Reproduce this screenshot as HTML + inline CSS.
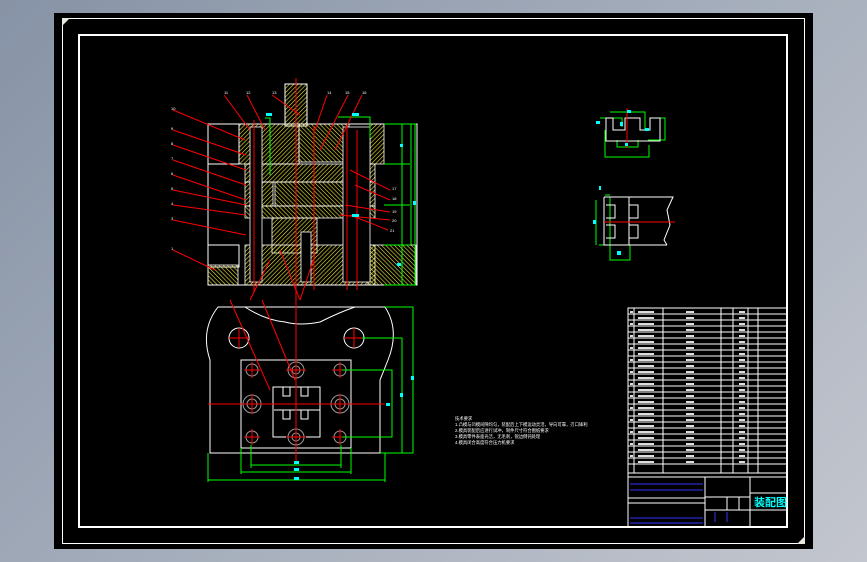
<!DOCTYPE html>
<html><head><meta charset="utf-8"><style>
html,body{margin:0;padding:0;width:867px;height:562px;overflow:hidden;background:linear-gradient(135deg,#8793a6 0%,#a4adbb 50%,#c3c6ce 100%);font-family:"Liberation Sans","Noto Sans CJK SC",sans-serif}
svg{position:absolute;left:0;top:0}
</style></head><body>
<svg width="867" height="562" viewBox="0 0 867 562" xmlns="http://www.w3.org/2000/svg">
<defs>
<pattern id="h" width="3" height="3" patternUnits="userSpaceOnUse" patternTransform="rotate(45)"><line x1="0" y1="0" x2="0" y2="3" stroke="#f0e83a" stroke-width="1.2"/></pattern>
<pattern id="h2" width="3" height="3" patternUnits="userSpaceOnUse" patternTransform="rotate(-45)"><line x1="0" y1="0" x2="0" y2="3" stroke="#f0e83a" stroke-width="1.2"/></pattern>
</defs>
<rect x="54" y="13" width="759" height="536" fill="#000"/>
<rect x="62.5" y="18.5" width="742" height="525" fill="none" stroke="#fff" stroke-width="1"/>
<rect x="79" y="35" width="708" height="492" fill="none" stroke="#fff" stroke-width="2"/>
<polygon points="62,18 70,18 62,26" fill="#e8e8dc"/>
<polygon points="805,544 797,544 805,536" fill="#e8e8dc"/>

<!-- Section view -->
<g stroke="#fff" stroke-width="1" fill="none">
<rect x="208" y="124" width="209" height="161"/>
<rect x="208" y="124" width="31" height="40"/>
<rect x="208" y="245" width="31" height="22"/>
<rect x="285" y="84" width="22" height="42" fill="url(#h)"/>
</g>
<g stroke="#fff" stroke-width="0.8">
<rect x="239" y="124" width="60" height="40" fill="url(#h)"/>
<rect x="299" y="124" width="50" height="38" fill="url(#h2)"/>
<rect x="370" y="124" width="14" height="40" fill="url(#h)"/>
<rect x="245" y="164" width="130" height="18" fill="url(#h)"/>
<rect x="275" y="182" width="70" height="24" fill="url(#h2)"/>
<rect x="245" y="182" width="28" height="24" fill="url(#h)"/>
<rect x="345" y="182" width="30" height="24" fill="url(#h)"/>
<rect x="245" y="206" width="130" height="12" fill="url(#h2)"/>
<rect x="272" y="218" width="45" height="35" fill="url(#h)"/>
<rect x="245" y="245" width="130" height="40" fill="url(#h)"/>
<rect x="208" y="265" width="30" height="20" fill="url(#h2)"/>
<rect x="368" y="245" width="48" height="40" fill="url(#h2)"/>
<rect x="343" y="127" width="27" height="155" fill="#000"/>
<rect x="250" y="127" width="12" height="155" fill="#000"/>
<rect x="301" y="232" width="10" height="50" fill="#000"/>
</g>
<g stroke="#0f0" stroke-width="1" fill="none">
<path d="M384 124H416M384 164H410M384 205H410M384 245H410M384 285H416M402 124V285M411 124V245M415 124V285"/>
<path d="M265 118H270V175M338 117H370V138"/>
</g>
<g stroke="#f00" stroke-width="1" fill="none">
<path d="M296 78V300M254 120V292M314 126V290M347 126V290M357 130V290"/>
<path d="M173 110L245 140M173 130L246 155M173 145L246 170M173 160L246 185M173 175L246 200M173 190L246 205M173 205L246 215M173 220L246 235M173 250L215 270M224 95L250 130M247 95L265 130M272 95L300 115M327 95L315 130M348 95L320 150M362 95L335 150M390 190L350 170M390 200L355 185M390 212L345 205M390 220L340 215M388 230L350 215M250 300L270 260M300 300L280 250M300 300L315 255"/>
</g>
<g fill="#0ff">
<rect x="266" y="113" width="6" height="3"/><rect x="352" y="113" width="7" height="3"/><rect x="352" y="214" width="7" height="3"/>
<rect x="400" y="144" width="3" height="3"/><rect x="413" y="201" width="3" height="4"/><rect x="397" y="263" width="4" height="3"/>
</g>
<g fill="#fff" font-size="4">
<text x="171" y="110">10</text><text x="171" y="130">9</text><text x="171" y="145">8</text><text x="171" y="160">7</text><text x="171" y="175">6</text><text x="171" y="190">5</text><text x="171" y="205">4</text><text x="171" y="220">3</text><text x="171" y="250">1</text>
<text x="224" y="94">11</text><text x="246" y="94">12</text><text x="272" y="94">13</text><text x="327" y="94">14</text><text x="345" y="94">15</text><text x="362" y="94">16</text>
<text x="392" y="190">17</text><text x="392" y="200">18</text><text x="392" y="213">19</text><text x="392" y="222">20</text><text x="390" y="232">21</text>
</g>

<!-- Plan view -->
<g stroke="#fff" stroke-width="1" fill="none">
<path d="M222 307H385Q400 330 388 360L380 380V453H210V360Q200 330 218 307ZM245 307Q265 320 285 322Q300 326 320 322Q340 312 355 307"/>
<rect x="241" y="360" width="110" height="88"/>
<path d="M273 387H320V437H273ZM274 410H320M283 387V396H290V387M301 387V396H308V387M283 410V419H290V410M301 410V419H308V410"/>
<circle cx="239" cy="338" r="10"/><circle cx="354" cy="338" r="10"/>
</g>
<g stroke="#999" stroke-width="1" fill="none">
<circle cx="252" cy="370" r="6"/><circle cx="340" cy="370" r="6"/><circle cx="252" cy="404" r="9"/><circle cx="340" cy="404" r="9"/><circle cx="252" cy="437" r="6"/><circle cx="340" cy="437" r="6"/><circle cx="296" cy="370" r="8"/><circle cx="296" cy="437" r="8"/>
<circle cx="252" cy="404" r="5"/><circle cx="340" cy="404" r="5"/><circle cx="296" cy="437" r="4"/><circle cx="296" cy="370" r="4"/>
</g>
<g stroke="#f00" stroke-width="1">
<path d="M208 404H385M296 300V462M229 338H249M239 328V348M344 338H364M354 328V348M244 370H260M252 362V378M332 370H348M340 362V378M244 437H260M252 429V445M332 437H348M340 429V445M286 437H306M286 370H306M252 394V414M340 394V414M230 300L270 390M262 300L295 380"/>
</g>
<g stroke="#0f0" stroke-width="1" fill="none">
<path d="M251 465H341M241 472H351M208 480H385M251 445V468M341 445V468M241 448V474M351 448V474M208 453V482M385 453V482M342 370H392V437H342M362 338H402V453M385 307H413V453H380M392 370V437M402 338V453M413 307V453"/>
</g>
<g fill="#0ff"><rect x="294" y="461" width="5" height="3"/><rect x="294" y="468" width="5" height="3"/><rect x="294" y="477" width="5" height="3"/><rect x="386" y="403" width="4" height="3"/><rect x="400" y="393" width="3" height="4"/><rect x="411" y="376" width="3" height="4"/></g>

<!-- Top right views -->
<g stroke="#0f0" stroke-width="1" fill="none">
<path d="M610 112H645V130M600 118H622V127M655 118H665V140H648M605 130V157H649V145M617 140V147H638V140"/>
<path d="M596 200V245M605 195H610M610 197V260H630V245M599 245H612"/>
</g>
<g stroke="#fff" stroke-width="1" fill="none">
<path d="M606 118H613V130H625V118H640V130H650V118H660V141H606Z"/>
<path d="M604 197H673L667 210L670 225L664 240L667 245M604 197V245H667M629 197V245"/>
<path d="M606 205H615V218H606M606 225H615V238H606M629 205H638V218H629M629 225H638V238H629"/>
</g>
<g stroke="#f00" stroke-width="1"><path d="M627 108V148M604 222H675"/></g>
<g fill="#0ff"><rect x="627" y="110" width="4" height="3"/><rect x="596" y="121" width="4" height="3"/><rect x="620" y="122" width="3" height="4"/><rect x="645" y="128" width="4" height="3"/><rect x="625" y="143" width="3" height="3"/><rect x="593" y="220" width="3" height="4"/><rect x="617" y="251" width="4" height="4"/><rect x="599" y="186" width="2" height="4"/></g>

<!-- Notes -->
<g fill="#fff" font-size="4.3">
<text x="455" y="420">技术要求</text>
<text x="455" y="426">1.凸模与凹模间隙均匀，装配后上下模运动灵活，导向可靠，刃口锋利</text>
<text x="455" y="432">2.模具装配后应进行试冲，制件尺寸符合图纸要求</text>
<text x="455" y="438">3.模具零件表面光洁，无毛刺，锐边倒钝处理</text>
<text x="455" y="444">4.模具闭合高度符合压力机要求</text>
</g>

<!-- Table -->
<g stroke="#fff" stroke-width="1" fill="none">
<rect x="628" y="308" width="159" height="219"/>
<path d="M634 308V473M663 308V473M721 308V473M733 308V473M748 308V473M758 308V473"/>
<path d="M628 314H787M628 320H787M628 326H787M628 332H787M628 338H787M628 344H787M628 350H787M628 356H787M628 362H787M628 368H787M628 374H787M628 380H787M628 386H787M628 392H787M628 398H787M628 404H787M628 410H787M628 416H787M628 422H787M628 428H787M628 434H787M628 440H787M628 446H787M628 452H787M628 458H787M628 464H787M628 473H787M628 477H787"/>
<path d="M628 477H787M705 477V527M750 477V527M750 493H787M750 510H787M628 498H705M628 503H705M705 510H750M705 497H750M727 497V510M739 497V510"/>
</g>
<g stroke="#33f" stroke-width="1"><path d="M630 484H703M630 490H703M630 518H703M630 523H703M715 512V522M727 512V522"/></g>
<g fill="#ddd">
<rect x="638" y="311" width="16" height="2"/><rect x="638" y="317" width="16" height="2"/><rect x="638" y="323" width="16" height="2"/><rect x="638" y="329" width="16" height="2"/><rect x="638" y="335" width="16" height="2"/><rect x="638" y="341" width="16" height="2"/><rect x="638" y="347" width="16" height="2"/><rect x="638" y="353" width="16" height="2"/><rect x="638" y="359" width="16" height="2"/><rect x="638" y="365" width="16" height="2"/><rect x="638" y="371" width="16" height="2"/><rect x="638" y="377" width="16" height="2"/><rect x="638" y="383" width="16" height="2"/><rect x="638" y="389" width="16" height="2"/><rect x="638" y="395" width="16" height="2"/><rect x="638" y="401" width="16" height="2"/><rect x="638" y="407" width="16" height="2"/><rect x="638" y="413" width="16" height="2"/><rect x="638" y="419" width="16" height="2"/><rect x="638" y="425" width="16" height="2"/><rect x="638" y="431" width="16" height="2"/><rect x="638" y="437" width="16" height="2"/><rect x="638" y="443" width="16" height="2"/><rect x="638" y="449" width="16" height="2"/><rect x="638" y="455" width="16" height="2"/><rect x="638" y="461" width="16" height="2"/>
<rect x="686" y="311" width="8" height="2"/><rect x="686" y="317" width="8" height="2"/><rect x="686" y="323" width="8" height="2"/><rect x="686" y="329" width="8" height="2"/><rect x="686" y="335" width="8" height="2"/><rect x="686" y="341" width="8" height="2"/><rect x="686" y="347" width="8" height="2"/><rect x="686" y="353" width="8" height="2"/><rect x="686" y="359" width="8" height="2"/><rect x="686" y="365" width="8" height="2"/><rect x="686" y="371" width="8" height="2"/><rect x="686" y="377" width="8" height="2"/><rect x="686" y="383" width="8" height="2"/><rect x="686" y="389" width="8" height="2"/><rect x="686" y="395" width="8" height="2"/><rect x="686" y="401" width="8" height="2"/><rect x="686" y="407" width="8" height="2"/><rect x="686" y="413" width="8" height="2"/><rect x="686" y="419" width="8" height="2"/><rect x="686" y="425" width="8" height="2"/><rect x="686" y="431" width="8" height="2"/><rect x="686" y="437" width="8" height="2"/><rect x="686" y="443" width="8" height="2"/><rect x="686" y="449" width="8" height="2"/><rect x="686" y="455" width="8" height="2"/><rect x="686" y="461" width="8" height="2"/>
<rect x="739" y="311" width="6" height="2"/><rect x="739" y="317" width="6" height="2"/><rect x="739" y="323" width="6" height="2"/><rect x="739" y="329" width="6" height="2"/><rect x="739" y="335" width="6" height="2"/><rect x="739" y="341" width="6" height="2"/><rect x="739" y="347" width="6" height="2"/><rect x="739" y="353" width="6" height="2"/><rect x="739" y="359" width="6" height="2"/><rect x="739" y="365" width="6" height="2"/><rect x="739" y="371" width="6" height="2"/><rect x="739" y="377" width="6" height="2"/><rect x="739" y="383" width="6" height="2"/><rect x="739" y="389" width="6" height="2"/><rect x="739" y="395" width="6" height="2"/><rect x="739" y="401" width="6" height="2"/><rect x="739" y="407" width="6" height="2"/><rect x="739" y="413" width="6" height="2"/><rect x="739" y="419" width="6" height="2"/><rect x="739" y="425" width="6" height="2"/><rect x="739" y="431" width="6" height="2"/><rect x="739" y="437" width="6" height="2"/><rect x="739" y="443" width="6" height="2"/><rect x="739" y="449" width="6" height="2"/><rect x="739" y="455" width="6" height="2"/><rect x="739" y="461" width="6" height="2"/>
<rect x="630" y="311" width="3" height="2"/><rect x="630" y="323" width="3" height="2"/><rect x="630" y="335" width="3" height="2"/><rect x="630" y="347" width="3" height="2"/><rect x="630" y="359" width="3" height="2"/><rect x="630" y="371" width="3" height="2"/><rect x="630" y="383" width="3" height="2"/><rect x="630" y="395" width="3" height="2"/><rect x="630" y="407" width="3" height="2"/><rect x="630" y="419" width="3" height="2"/><rect x="630" y="431" width="3" height="2"/><rect x="630" y="443" width="3" height="2"/><rect x="630" y="455" width="3" height="2"/>
</g>
<text x="754" y="506" fill="#0ff" font-size="11" font-weight="bold">装配图</text>
</svg>
</body></html>
